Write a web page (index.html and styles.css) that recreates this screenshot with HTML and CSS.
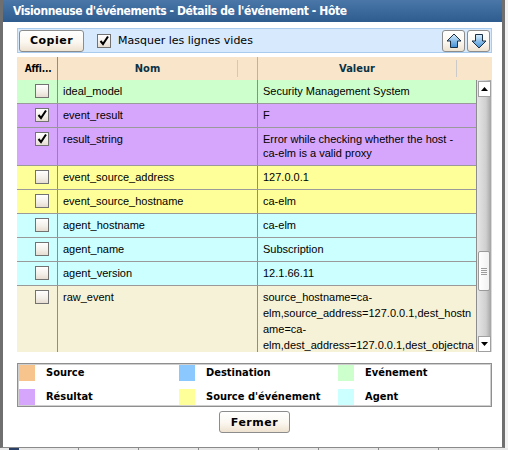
FILE: index.html
```html
<!DOCTYPE html>
<html lang="fr">
<head>
    <meta charset="UTF-8">
    <meta name="viewport" content="width=device-width, initial-scale=1.0">
    <title>Visionneuse d'événements</title>
    <link rel="stylesheet" href="styles.css">
</head>
<body>
    <div class="window">
        <div class="titlebar">Visionneuse d'événements - Détails de l'événement - Hôte</div>
        <div class="content">
            <div class="toolbar">
                <button class="btn copy">Copier</button>
                <label class="hide-empty">
                    <span class="check">
                        <svg width="12" height="12" viewBox="0 0 12 12"><path d="M2.5 6 L5 9 L10 1.5" fill="none" stroke="#000" stroke-width="2"/></svg>
                    </span>
                    Masquer les lignes vides
                </label>
                <div class="nav">
                    <button class="btn arrow">
                        <svg width="16" height="16" viewBox="0 0 16 16">
                            <defs>
                                <linearGradient id="ga" x1="0" y1="0" x2="0" y2="1">
                                    <stop offset="0" stop-color="#d8eefc"/>
                                    <stop offset="1" stop-color="#3f8ed6"/>
                                </linearGradient>
                            </defs>
                            <path d="M8 1 L15 8 L11.5 8 L11.5 14.5 L4.5 14.5 L4.5 8 L1 8 Z" fill="url(#ga)" stroke="#1b2f45" stroke-width="1"/>
                        </svg>
                    </button>
                    <button class="btn arrow">
                        <svg width="16" height="16" viewBox="0 0 16 16">
                            <defs>
                                <linearGradient id="gb" x1="0" y1="0" x2="0" y2="1">
                                    <stop offset="0" stop-color="#d8eefc"/>
                                    <stop offset="1" stop-color="#3f8ed6"/>
                                </linearGradient>
                            </defs>
                            <path d="M8 15 L15 8 L11.5 8 L11.5 1.5 L4.5 1.5 L4.5 8 L1 8 Z" fill="url(#gb)" stroke="#1b2f45" stroke-width="1"/>
                        </svg>
                    </button>
                </div>
            </div>

            <div class="grid">
                <div class="grid-head">
                    <div class="hcell col-show">Affi...</div>
                    <div class="hcell col-name">Nom</div>
                    <span class="sep"></span>
                    <div class="hcell col-gap"></div>
                    <div class="hcell col-value">Valeur</div>
                    <span class="sep"></span>
                </div>
                <div class="grid-body">
                    <div class="rows">
                        <div class="row evt">
                            <div class="cell show"><span class="check"></span></div>
                            <div class="cell">ideal_model</div>
                            <div class="cell">Security Management System</div>
                        </div>
                        <div class="row result">
                            <div class="cell show"><span class="check"><svg width="12" height="12" viewBox="0 0 12 12"><path d="M2.5 6 L5 9 L10 1.5" fill="none" stroke="#000" stroke-width="2"/></svg></span></div>
                            <div class="cell">event_result</div>
                            <div class="cell">F</div>
                        </div>
                        <div class="row result">
                            <div class="cell show"><span class="check"><svg width="12" height="12" viewBox="0 0 12 12"><path d="M2.5 6 L5 9 L10 1.5" fill="none" stroke="#000" stroke-width="2"/></svg></span></div>
                            <div class="cell">result_string</div>
                            <div class="cell">Error while checking whether the host -<br>ca-elm is a valid proxy</div>
                        </div>
                        <div class="row esrc">
                            <div class="cell show"><span class="check"></span></div>
                            <div class="cell">event_source_address</div>
                            <div class="cell">127.0.0.1</div>
                        </div>
                        <div class="row esrc">
                            <div class="cell show"><span class="check"></span></div>
                            <div class="cell">event_source_hostname</div>
                            <div class="cell">ca-elm</div>
                        </div>
                        <div class="row agent">
                            <div class="cell show"><span class="check"></span></div>
                            <div class="cell">agent_hostname</div>
                            <div class="cell">ca-elm</div>
                        </div>
                        <div class="row agent">
                            <div class="cell show"><span class="check"></span></div>
                            <div class="cell">agent_name</div>
                            <div class="cell">Subscription</div>
                        </div>
                        <div class="row agent">
                            <div class="cell show"><span class="check"></span></div>
                            <div class="cell">agent_version</div>
                            <div class="cell">12.1.66.11</div>
                        </div>
                        <div class="row raw">
                            <div class="cell show"><span class="check"></span></div>
                            <div class="cell">raw_event</div>
                            <div class="cell tall">source_hostname=ca-<br>elm,source_address=127.0.0.1,dest_hostn<br>ame=ca-<br>elm,dest_address=127.0.0.1,dest_objectna</div>
                        </div>
                    </div>
                    <div class="scrollbar">
                        <div class="sb-btn">
                            <svg width="7" height="4" viewBox="0 0 7 4"><path d="M0 4 L3.5 0 L7 4 Z" fill="#000"/></svg>
                        </div>
                        <div class="sb-track">
                            <div class="sb-thumb"><span></span><span></span><span></span><span></span></div>
                        </div>
                        <div class="sb-btn">
                            <svg width="7" height="4" viewBox="0 0 7 4"><path d="M0 0 L3.5 4 L7 0 Z" fill="#000"/></svg>
                        </div>
                    </div>
                </div>
            </div>

            <div class="legend">
                <div class="item"><span class="swatch" style="background:#f8c48e"></span><span class="label">Source</span></div>
                <div class="item"><span class="swatch" style="background:#8ac8fe"></span><span class="label">Destination</span></div>
                <div class="item"><span class="swatch" style="background:#ccffcc"></span><span class="label">Evénement</span></div>
                <div class="item"><span class="swatch" style="background:#d5a6fc"></span><span class="label">Résultat</span></div>
                <div class="item"><span class="swatch" style="background:#ffff99"></span><span class="label">Source d'événement</span></div>
                <div class="item"><span class="swatch" style="background:#ccffff"></span><span class="label">Agent</span></div>
            </div>

            <div class="footer">
                <button class="btn close">Fermer</button>
            </div>
        </div>
    </div>
    <div class="taskbar"><span></span><span></span><span></span><span></span><span></span><span></span><span></span><span></span></div>
</body>
</html>
```

FILE: styles.css
```css
body {
    margin: 0;
    width: 508px;
    height: 450px;
    overflow: hidden;
    background-color: #f2f2f2;
    font-family: "Liberation Sans", Arial, sans-serif;
}
.window {
    width: 505px;
    height: 448px;
    box-sizing: border-box;
    background-color: #fff;
    border-left: 3px solid #6f6f6f;
    border-right: 3px solid #6f6f6f;
    border-bottom: 1px solid #8a8a8a;
}
.titlebar {
    height: 22px;
    line-height: 22px;
    padding-left: 10px;
    color: #fff;
    font-family: "DejaVu Sans Condensed", "DejaVu Sans", sans-serif;
    font-weight: bold;
    font-size: 12px;
    letter-spacing: -0.4px;
    background: linear-gradient(#4a77a8, #2e5c8f);
    white-space: nowrap;
}
.content {
    padding: 6px 10px 0 14px;
}

/* toolbar */
.toolbar {
    display: flex;
    align-items: center;
    height: 25px;
    box-sizing: border-box;
    padding: 0 1px;
    border: 1px solid #a9cbee;
    background-color: #d6e9fd;
}
.btn {
    height: 22px;
    padding: 0;
    border: 1px solid #8c8c8c;
    border-radius: 3px;
    background: linear-gradient(#ffffff, #fbf7f0 55%, #eee2d0);
    font-family: "DejaVu Sans", Verdana, sans-serif;
    font-weight: bold;
    font-size: 11px;
    letter-spacing: 0.5px;
    color: #000;
    cursor: pointer;
}
.copy {
    width: 65px;
}
.hide-empty {
    display: flex;
    align-items: center;
    margin-left: 13px;
    font-family: "DejaVu Sans", Verdana, sans-serif;
    font-size: 11px;
    color: #000;
}
.hide-empty .check {
    margin-right: 7px;
}
.check {
    display: flex;
    align-items: center;
    justify-content: center;
    width: 14px;
    height: 14px;
    box-sizing: border-box;
    border: 1px solid #727272;
    background: linear-gradient(#ffffff, #f3eee8 60%, #e6ddd2);
}
.nav {
    margin-left: auto;
    display: flex;
    gap: 2px;
}
.arrow {
    width: 23px;
    display: flex;
    align-items: center;
    justify-content: center;
}

/* grid */
.grid {
    margin-top: 4px;
}
.grid-head {
    display: flex;
    align-items: center;
    height: 23px;
    background-color: #f9e6ca;
    font-family: "DejaVu Sans Condensed", "DejaVu Sans", sans-serif;
    font-weight: bold;
    font-size: 11px;
    color: #0b3247;
}
.hcell {
    height: 23px;
    box-sizing: border-box;
    display: flex;
    align-items: center;
    justify-content: center;
}
.col-show {
    width: 41px;
    padding-left: 2px;
    color: #000;
    font-size: 10px;
    letter-spacing: -0.2px;
    border-right: 1px solid #8d8d8d;
}
.col-name {
    width: 179px;
}
.col-gap {
    width: 20px;
    border-right: 1px solid #b4b4b4;
}
.col-value {
    width: 198px;
}
.sep {
    width: 1px;
    height: 17px;
    background-color: #cacaca;
}
.grid-body {
    display: flex;
    height: 272px;
    overflow: hidden;
}
.rows {
    width: 460px;
    border-right: 1px solid #8d8d8d;
    overflow: hidden;
}
.row {
    display: grid;
    grid-template-columns: 41px 200px 1fr;
    border-bottom: 1px solid #9a9a9a;
    font-size: 11px;
    color: #000;
}
.cell {
    padding: 4px 5px 5px;
    line-height: 14px;
    box-sizing: border-box;
    border-right: 1px solid #8d8d8d;
}
.cell:last-child {
    border-right: none;
}
.cell.show {
    display: flex;
    align-items: flex-start;
    padding-left: 18px;
}
.cell.tall {
    padding-top: 3px;
    padding-bottom: 0;
    line-height: 16px;
}
.evt { background-color: #ccffcc; }
.result { background-color: #d5a6fc; }
.esrc { background-color: #ffff99; }
.agent { background-color: #ccffff; }
.raw { background-color: #f6f2d7; }

/* scrollbar */
.scrollbar {
    width: 15px;
    display: flex;
    flex-direction: column;
    background: linear-gradient(to right, #e6e6e6, #cfcfcf 60%, #a9a9a9 90%, #f4f4f4);
}
.sb-btn {
    height: 16px;
    margin: 1px 0 0 1px;
    width: 13px;
    box-sizing: border-box;
    border: 1px solid #a0a0a0;
    background-color: #fff;
    display: flex;
    align-items: center;
    justify-content: center;
}
.sb-track {
    flex: 1;
    padding-top: 154px;
}
.sb-thumb {
    height: 40px;
    width: 12px;
    margin-left: 1px;
    box-sizing: border-box;
    border: 1px solid #9a9a9a;
    border-radius: 2px;
    background: linear-gradient(to right, #ffffff, #f1f1f1);
    display: flex;
    flex-direction: column;
    align-items: center;
    justify-content: center;
    gap: 1px;
}
.sb-thumb span {
    width: 6px;
    height: 1px;
    background-color: #9c9c9c;
}

/* legend */
.legend {
    margin-top: 11px;
    display: grid;
    grid-template-columns: 160px 159px 1fr;
    row-gap: 8px;
    padding: 1px 0 1px 1px;
    border: 1px solid #8f8f8f;
    box-shadow: inset 0 0 0 1px #cfcfcf;
    font-family: "DejaVu Sans Condensed", "DejaVu Sans", sans-serif;
    font-weight: bold;
    font-size: 11px;
    color: #000;
}
.item {
    display: flex;
    align-items: center;
    gap: 11px;
    height: 16px;
}
.label {
    line-height: 16px;
    white-space: nowrap;
}
.swatch {
    width: 16px;
    height: 16px;
    flex-shrink: 0;
}

/* footer */
.footer {
    display: flex;
    justify-content: center;
    margin-top: 4px;
}
.close {
    width: 71px;
}

.taskbar {
    display: flex;
    height: 2px;
    background-color: #e8e8e8;
}
.taskbar span {
    width: 59px;
    border-right: 1px solid #8a8a8a;
}
.taskbar span:first-child {
    width: 9px;
    border-right: 10px solid #2a3f66;
}
```
